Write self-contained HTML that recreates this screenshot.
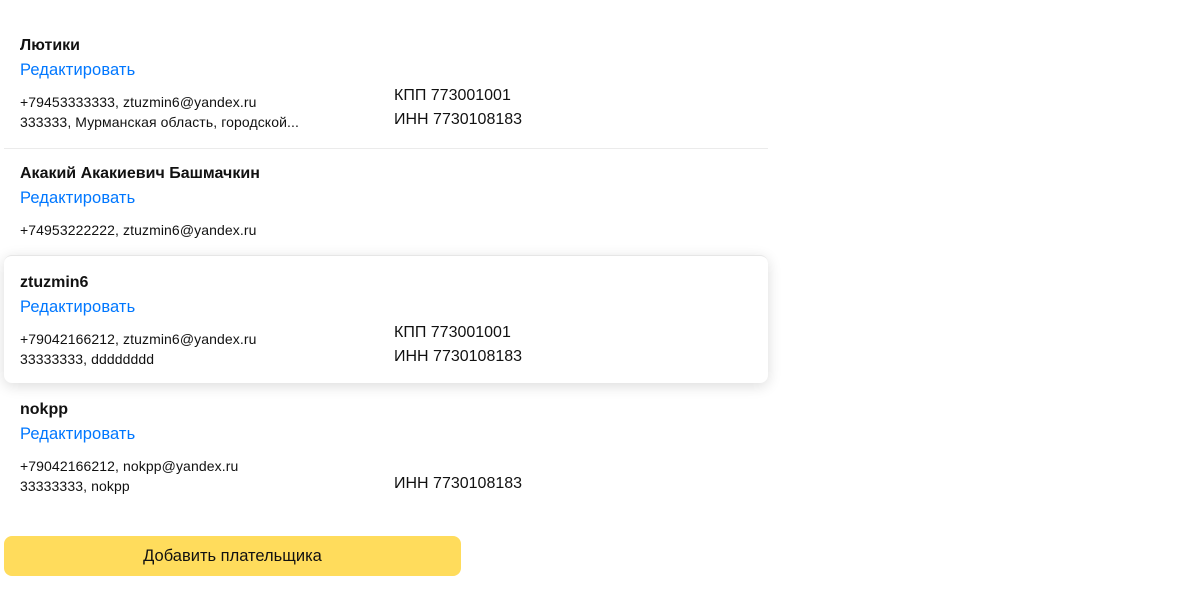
<!DOCTYPE html>
<html><head><meta charset="utf-8"><style>
body{margin:0;width:1200px;height:600px;background:#fff;font-family:"Liberation Sans",sans-serif;color:#111;position:relative;overflow:hidden}
.b{position:absolute;left:4px;width:764px;height:128px}
.b.sel{background:#fff;border-radius:8px;box-shadow:0 3px 14px rgba(0,0,0,.14);border-top:1px solid #e6e6e6;box-sizing:border-box}
.sep{border-bottom:1px solid #ebebeb}
.t{position:absolute;white-space:nowrap;line-height:20px}
.n{left:16px;top:16px;font-size:16px;font-weight:bold;letter-spacing:0}
.e{left:16px;top:40px;font-size:16.5px;color:#0077ff;letter-spacing:.1px}
.c{left:16px;font-size:14px;letter-spacing:.1px}
.k{left:390px;font-size:16px;letter-spacing:0}
.btn{position:absolute;left:4px;top:536px;width:457px;height:40px;background:#ffdc5c;border-radius:8px;font-size:16.5px;text-align:center;line-height:40px}
</style></head><body>
<div class="b sep" style="top:20px">
<div class="t n">Лютики</div><div class="t e">Редактировать</div>
<div class="t c" style="top:72px">+79453333333, ztuzmin6@yandex.ru</div>
<div class="t c" style="top:92px">333333, Мурманская область, городской...</div>
<div class="t k" style="top:66px">КПП 773001001</div>
<div class="t k" style="top:90px">ИНН 7730108183</div>
</div>
<div class="b" style="top:148px">
<div class="t n">Акакий Акакиевич Башмачкин</div><div class="t e">Редактировать</div>
<div class="t c" style="top:72px">+74953222222, ztuzmin6@yandex.ru</div>
</div>
<div class="b sel" style="top:255px">
<div class="t n" style="top:17px">ztuzmin6</div><div class="t e" style="top:41px">Редактировать</div>
<div class="t c" style="top:73px">+79042166212, ztuzmin6@yandex.ru</div>
<div class="t c" style="top:93px">33333333, dddddddd</div>
<div class="t k" style="top:67px">КПП 773001001</div>
<div class="t k" style="top:91px">ИНН 7730108183</div>
</div>
<div class="b" style="top:384px">
<div class="t n">nokpp</div><div class="t e">Редактировать</div>
<div class="t c" style="top:72px">+79042166212, nokpp@yandex.ru</div>
<div class="t c" style="top:92px">33333333, nokpp</div>
<div class="t k" style="top:90px">ИНН 7730108183</div>
</div>
<div class="btn">Добавить плательщика</div>
</body></html>
